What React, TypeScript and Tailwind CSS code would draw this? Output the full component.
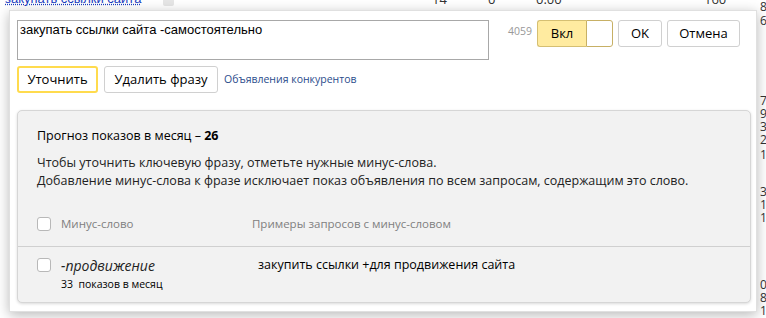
import React from "react";

const Checkbox = () => (
  <span className="inline-block w-[14px] h-[14px] rounded-[3px] border border-[#b8b8b8] bg-white shrink-0" />
);

export default function App() {
  const rightDigits: { d: string; mt: number }[] = [
    { d: "8", mt: 0 },
    { d: "6", mt: 1 },
    { d: "7", mt: 67 },
    { d: "9", mt: 0 },
    { d: "3", mt: 0 },
    { d: "2", mt: 0 },
    { d: "1", mt: 2 },
    { d: "3", mt: 24 },
    { d: "1", mt: 0 },
    { d: "1", mt: 0 },
    { d: "0", mt: 54 },
    { d: "8", mt: 0 },
    { d: "1", mt: 0 },
  ];
  return (
    <div
      className="relative w-[766px] h-[318px] overflow-hidden bg-white text-[#000]"
      style={{ fontFamily: '"Open Sans", "Liberation Sans", Arial, sans-serif' }}
    >
      {/* background page */}
      <div className="flex w-full h-full">
        <div className="flex-1">
          <div className="flex items-start h-[10px] mt-[-8px] text-[13px] leading-[14px] text-[#333]">
            <span className="ml-[5px] w-[150px] text-[#1a3dc1] underline decoration-dotted" style={{ fontFamily: '"Liberation Sans", Arial, sans-serif' }}>закупать ссылки сайта</span>
            <span className="ml-[8px] w-[11px] h-[14px] bg-[#e6e6e6] rounded-[2px]" />
            <span className="ml-[258px] w-[40px]">14</span>
            <span className="ml-[16px] w-[20px]">0</span>
            <span className="ml-[28px] w-[40px]">0.00</span>
            <span className="ml-[128px]">160</span>
          </div>
        </div>
        <div className="w-[6px] flex flex-col text-[12px] leading-[13px] text-[#333]">
          {rightDigits.map((r, i) => (
            <span key={i} style={{ marginTop: r.mt }}>{r.d}</span>
          ))}
        </div>
      </div>

      {/* popup */}
      <div className="absolute left-[9px] top-[10px] w-[748px] h-[302px] bg-white border border-[#e0e0e0] shadow-[0_3px_12px_rgba(0,0,0,0.28)] pl-[7px] pt-[9px]">
        <div className="flex items-start">
          <div
            className="w-[472px] h-[40px] border border-[#a8a8a8] bg-white px-[2px] pt-[1px] text-[13px] leading-[15px] text-[#000]"
            style={{ fontFamily: '"Liberation Sans", Arial, sans-serif' }}
          >
            закупать ссылки сайта -самостоятельно
          </div>
          <span className="ml-[19px] mt-[4px] text-[10.5px] leading-[14px] text-[#999]">4059</span>
          <div className="ml-[5px] flex h-[27px]">
            <div className="w-[49px] h-[27px] bg-[#ffeba0] border border-[#d5bf72] border-r-0 rounded-l-[3px] flex items-center justify-center text-[13px] text-[#000]">
              Вкл
            </div>
            <div className="w-[27px] h-[27px] bg-white border border-[#c7b065] rounded-r-[3px]" />
          </div>
          <button className="ml-[5px] w-[44px] h-[27px] border border-[#d0d0d0] rounded-[3px] bg-white text-[13px] text-[#000] flex items-center justify-center">
            OK
          </button>
          <button className="ml-[5px] w-[73px] h-[27px] border border-[#d0d0d0] rounded-[3px] bg-white text-[13px] text-[#000] flex items-center justify-center">
            Отмена
          </button>
        </div>

        <div className="flex items-center mt-[6px]">
          <button className="w-[81px] h-[27px] border-2 border-[#ffdb4d] rounded-[3px] bg-white text-[13px] text-[#000] flex items-center justify-center">
            Уточнить
          </button>
          <button className="ml-[6px] w-[114px] h-[27px] border border-[#d0d0d0] rounded-[3px] bg-white text-[13px] text-[#000] flex items-center justify-center">
            Удалить фразу
          </button>
          <span className="ml-[6px] text-[10.5px] text-[#2b4c8c]">Объявления конкурентов</span>
        </div>

        <div className="mt-[17px] w-[734px] h-[193px] bg-[#f2f2f2] border border-[#d6d6d6] rounded-[5px] shadow-[0_1px_3px_rgba(0,0,0,0.15)]">
          <div className="pl-[19px] pt-[16px] text-[12.5px] leading-[18px] text-[#000]">
            Прогноз показов в месяц – <b>26</b>
          </div>
          <div className="pl-[19px] mt-[9px] text-[12.5px] leading-[18px] text-[#222]">
            <div>Чтобы уточнить ключевую фразу, отметьте нужные минус-слова.</div>
            <div>Добавление минус-слова к фразе исключает показ объявления по всем запросам, содержащим это слово.</div>
          </div>
          <div className="flex items-center pl-[19px] mt-[26px] h-[16px] text-[11.5px] text-[#808080]">
            <Checkbox />
            <span className="ml-[10px] w-[191px]">Минус-слово</span>
            <span>Примеры запросов с минус-словом</span>
          </div>
          <div className="mt-[14px] border-t border-[#d0d0d0]" />
          <div className="flex items-center pl-[19px] mt-[10px] h-[16px]">
            <Checkbox />
            <span className="ml-[10px] w-[197px] italic text-[14px] text-[#222]">-продвижение</span>
            <span className="text-[12.5px] text-[#000]">закупить ссылки +для продвижения сайта</span>
          </div>
          <div className="pl-[43px] mt-[4px] text-[10.5px] leading-[14px] text-[#000]">
            33&nbsp; показов в месяц
          </div>
        </div>
      </div>
    </div>
  );
}
